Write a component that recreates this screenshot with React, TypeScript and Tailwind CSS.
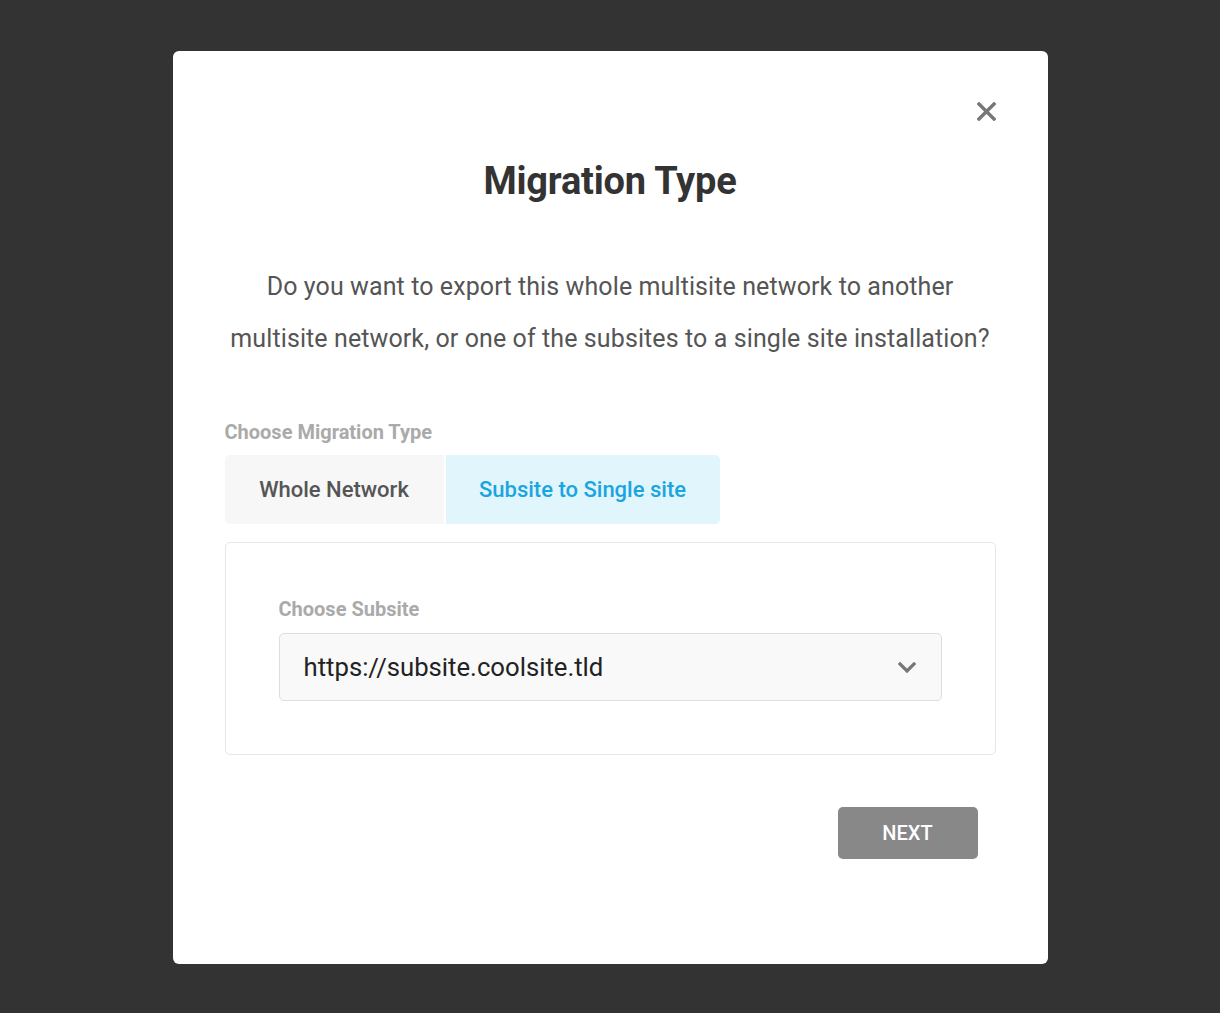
import { useState } from "react";

const tabs = [
  { id: "network", label: "Whole Network", width: "w-[219px]" },
  { id: "subsite", label: "Subsite to Single site", width: "w-[274px]" },
];

export default function App() {
  const [active, setActive] = useState("subsite");

  return (
    <div className="min-h-[1013px] bg-[#333333] flex justify-center pt-[51px] font-['Roboto',sans-serif]">
      <div className="relative w-[875px] h-[913px] bg-white rounded-[6px] px-[52px] pt-[107px]">
        <button className="absolute top-[51px] right-[52px] w-[19px] h-[19px] text-[#777]" aria-label="Close">
          <svg viewBox="0 0 19 19" className="w-full h-full" fill="none" stroke="currentColor" strokeWidth="3.4" strokeLinecap="square">
            <path d="M2 2L17 17M17 2L2 17" />
          </svg>
        </button>

        <h1 className="text-center text-[38px] leading-[46px] font-bold text-[#333] tracking-[-0.2px]">
          Migration Type
        </h1>

        <p className="mt-[57px] text-center text-[25px] leading-[52px] text-[#555] tracking-[0.1px]">
          Do you want to export this whole multisite network to another
          <br />
          multisite network, or one of the subsites to a single site installation?
        </p>

        <div className="mt-[55px] text-[20px] leading-[24px] font-bold text-[#aaa]">
          Choose Migration Type
        </div>

        <div className="mt-[11px] flex gap-[2px]">
          {tabs.map((tab, i) => (
            <button
              key={tab.id}
              onClick={() => setActive(tab.id)}
              className={
                "h-[69px] text-[22px] font-medium " +
                tab.width +
                (i === 0 ? " rounded-l-[5px] " : " rounded-r-[5px] ") +
                (active === tab.id ? "bg-[#e1f5fd] text-[#1ba5e0]" : "bg-[#f7f7f7] text-[#555]")
              }
            >
              {tab.label}
            </button>
          ))}
        </div>

        <div className="mt-[18px] border border-[#e6e6e6] rounded-[5px] px-[53px] pt-[53px] pb-[53px]">
          <div className="text-[20px] leading-[26px] font-bold text-[#aaa]">Choose Subsite</div>
          <div className="mt-[11px] h-[68px] flex items-center justify-between bg-[#f9f9f9] border border-[#dddddd] rounded-[5px] pl-[24px] pr-[25px]">
            <span className="text-[25.7px] text-[#222]">https://subsite.coolsite.tld</span>
            <svg viewBox="0 0 18 12" className="w-[18px] h-[12px] mt-[2px] text-[#777]" fill="none" stroke="currentColor" strokeWidth="3.2" strokeLinecap="square">
              <path d="M2 2L9 9L16 2" />
            </svg>
          </div>
        </div>

        <div className="mt-[52px] flex justify-end pr-[18px]">
          <button className="w-[140px] h-[52px] bg-[#888888] text-white text-[20px] font-medium rounded-[5px]">
            NEXT
          </button>
        </div>
      </div>
    </div>
  );
}
